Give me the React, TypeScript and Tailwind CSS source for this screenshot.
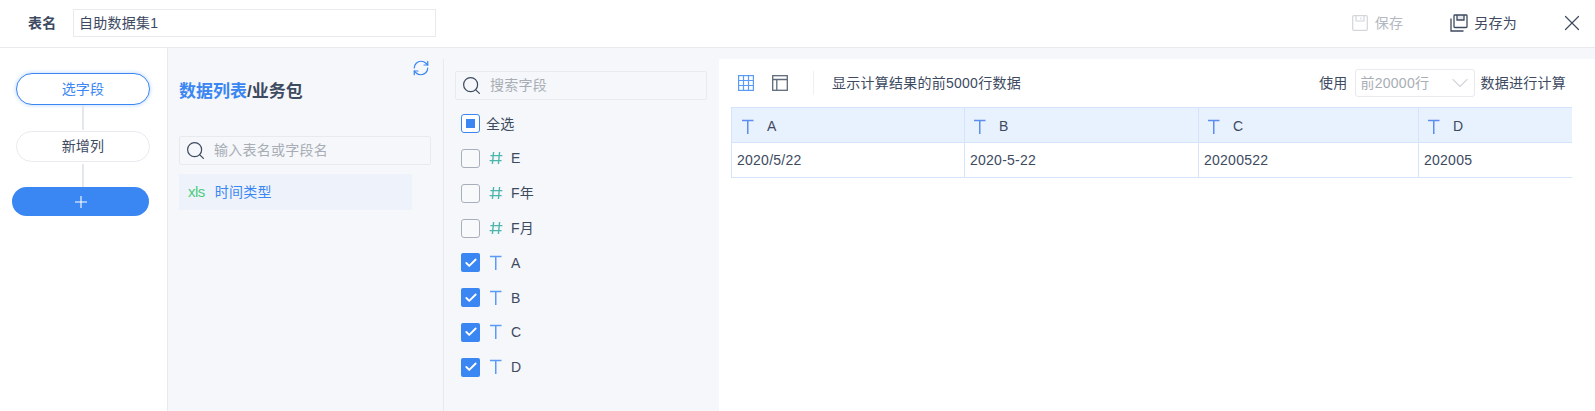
import { Check, ChevronDown, RefreshCw, Search, X } from "lucide-react"

const FONT = "font-['Liberation_Sans','Noto_Sans_CJK_SC',sans-serif]"

const FIELDS = [
  { name: "E", kind: "num", checked: false },
  { name: "F年", kind: "num", checked: false },
  { name: "F月", kind: "num", checked: false },
  { name: "A", kind: "text", checked: true },
  { name: "B", kind: "text", checked: true },
  { name: "C", kind: "text", checked: true },
  { name: "D", kind: "text", checked: true },
]

const COLUMNS = [
  { name: "A", value: "2020/5/22", width: "w-[234px]" },
  { name: "B", value: "2020-5-22", width: "w-[234px]" },
  { name: "C", value: "20200522", width: "w-[220px]" },
  { name: "D", value: "202005", width: "flex-1" },
]

function TextIcon({ className = "" }: { className?: string }) {
  return (
    <svg viewBox="0 0 14 16" className={`w-[14px] h-4 ${className}`} fill="none" stroke="currentColor" strokeWidth="1.5">
      <path d="M1 1.6h11.5M6.75 1.6V15" />
    </svg>
  )
}

function HashIcon() {
  return (
    <svg viewBox="0 0 14 14" className="w-[14px] h-[14px] text-[#4db6ac]" fill="none" stroke="currentColor" strokeWidth="1.4">
      <path d="M4.6 1 3.4 13M10.6 1 9.4 13M1.4 4.6h12M.6 9.6h12" />
    </svg>
  )
}

function SaveIcon({ className = "" }: { className?: string }) {
  return (
    <svg viewBox="0 0 16 16" className={`w-4 h-4 ${className}`} fill="none" stroke="currentColor" strokeWidth="1.2">
      <rect x="0.7" y="0.7" width="14.6" height="14.6" rx="1" />
      <path d="M4 1v5h8V1M9 2.5v2" />
    </svg>
  )
}

function SaveAsIcon() {
  return (
    <svg viewBox="0 0 18 18" className="w-[18px] h-[18px] text-[#3d4a5f]" fill="none" stroke="currentColor" strokeWidth="1.3">
      <path d="M1 4.5V17h12.5" />
      <rect x="4" y="1" width="13" height="12.5" rx="0.8" />
      <path d="M7 1v5h7V1" fill="#3d4a5f" fillOpacity="0.12" />
    </svg>
  )
}

function GridIcon() {
  return (
    <svg viewBox="0 0 16 16" className="w-4 h-4 text-[#5b9bf8]" fill="none" stroke="currentColor" strokeWidth="1.2">
      <rect x="0.6" y="0.6" width="14.8" height="14.8" />
      <path d="M5.5 1v14M10.5 1v14M1 5.5h14M1 10.5h14" />
    </svg>
  )
}

function LayoutIcon() {
  return (
    <svg viewBox="0 0 16 16" className="w-4 h-4 text-[#5f6a7a]" fill="none" stroke="currentColor" strokeWidth="1.3">
      <rect x="0.7" y="0.7" width="14.6" height="14.6" />
      <path d="M1 4.5h14M4.8 5v10" />
    </svg>
  )
}

function SearchBox({ placeholder, className = "" }: { placeholder: string; className?: string }) {
  return (
    <div className={`flex items-center h-[29px] rounded-[2px] border border-[#e8eaee] bg-[#f5f7fa] ${className}`}>
      <Search className="ml-[5px] w-[21px] h-[21px] text-[#3d4a5f]" strokeWidth={1.4} />
      <span className="ml-2 text-[14px] text-[#a8adb5]">{placeholder}</span>
    </div>
  )
}

function Box({ state }: { state: "none" | "some" | "all" }) {
  if (state === "all") {
    return (
      <span className="flex items-center justify-center w-[19px] h-[19px] rounded-[2px] bg-[#3a86f2]">
        <Check className="w-[14px] h-[14px] text-white" strokeWidth={3.2} />
      </span>
    )
  }
  if (state === "some") {
    return (
      <span className="flex items-center justify-center w-[19px] h-[19px] rounded-[3px] border border-[#3a86f2] bg-white">
        <span className="w-[9px] h-[9px] bg-[#3a86f2]" />
      </span>
    )
  }
  return <span className="block w-[19px] h-[19px] rounded-[3px] border border-[#a9afba] bg-[#f8f9fb]" />
}

export default function App() {
  return (
    <div className={`${FONT} w-[1595px] h-[411px] flex flex-col overflow-hidden bg-white text-[14px] tracking-[0.25px] text-[#3d4a5f]`}>
      {/* Header */}
      <header className="h-[48px] shrink-0 flex items-center border-b border-[#e8eaee] pb-[1px]">
        <span className="ml-7 w-[45px] font-bold text-[14px] text-[#3d4a5f]">表名</span>
        <div className="w-[363px] h-[28px] flex items-center pl-[5px] border border-[#e8eaee] bg-white">自助数据集1</div>
        <div className="ml-auto flex items-center">
          <span className="flex items-center gap-[7px] text-[#b3b8c0]">
            <SaveIcon className="text-[#d3d6db]" />
            保存
          </span>
          <span className="ml-[47px] flex items-center gap-[6px]">
            <SaveAsIcon />
            另存为
          </span>
          <X className="ml-[42px] mr-[10px] w-[26px] h-[26px] text-[#3d4a5f]" strokeWidth={1.1} />
        </div>
      </header>

      <div className="flex flex-1 min-h-0">
        {/* Steps */}
        <aside className="w-[168px] shrink-0 border-r border-[#e8eaee] bg-white pt-[25px] pl-3">
          <div className="ml-1 w-[134px] h-[32px] flex items-center justify-center rounded-full border border-[#3a86f2] bg-white text-[#3a86f2] shadow-[0_0_4px_#b9d4fa]">
            选字段
          </div>
          <div className="ml-[70px] w-[2px] h-[25px] bg-[#e4e7ec]" />
          <div className="ml-1 mt-[1px] w-[134px] h-[31px] flex items-center justify-center rounded-full border border-[#e8eaee] bg-white">
            新增列
          </div>
          <div className="ml-[70px] mt-[2px] w-[2px] h-[23px] bg-[#e4e7ec]" />
          <div className="w-[137px] h-[29px] flex items-center justify-center rounded-full bg-[#3a86f2]">
            <svg viewBox="0 0 12 12" className="w-3 h-3 text-white" fill="none" stroke="currentColor" strokeWidth="1.1">
              <path d="M6 0v12M0 6h12" />
            </svg>
          </div>
        </aside>

        <div className="flex-1 flex flex-col min-w-0 bg-[#f5f7fa]">
          <div className="flex flex-1 min-h-0 pt-[11px]">
            {/* Data list */}
            <section className="relative w-[276px] shrink-0 border-r border-[#e8eaee] pl-[11px]">
              <RefreshCw className="absolute right-[13px] top-0 w-[18px] h-[18px] text-[#3a86f2]" strokeWidth={1.6} />
              <h2 className="mt-[22px] h-[22px] leading-[22px] text-[17px] tracking-normal font-bold text-[#3d4a5f]">
                <span className="text-[#3a86f2]">数据列表</span>/业务包
              </h2>
              <SearchBox placeholder="输入表名或字段名" className="mt-[33px] w-[252px]" />
              <div className="mt-[9px] w-[233px] h-[36px] flex items-center bg-[#eef3fb]">
                <span className="ml-[9px] text-[15px] tracking-[-0.5px] text-[#4ccb7c]">xls</span>
                <span className="ml-[10px] text-[#3a86f2]">时间类型</span>
              </div>
            </section>

            {/* Field list */}
            <section className="w-[275px] shrink-0 pl-[11px]">
              <SearchBox placeholder="搜索字段" className="mt-[12px] w-[252px]" />
              <div className="ml-[6px] mt-[14.2px] h-[19px] flex items-center">
                <Box state="some" />
                <span className="ml-[6px] pt-[1px]">全选</span>
              </div>
              {FIELDS.map((f) => (
                <div key={f.name} className="ml-[6px] mt-[15.8px] h-[19px] flex items-center">
                  <Box state={f.checked ? "all" : "none"} />
                  <span className="ml-[9px] w-[14px] flex justify-center">
                    {f.kind === "num" ? <HashIcon /> : <TextIcon className="text-[#5b9bf8]" />}
                  </span>
                  <span className="ml-2 pt-[1px]">{f.name}</span>
                </div>
              ))}
            </section>

            {/* Preview */}
            <main className="flex-1 min-w-0 bg-white">
              <div className="h-[48px] flex items-center pl-[19px] pr-[29px]">
                <span className="mr-[18px]"><GridIcon /></span>
                <LayoutIcon />
                <span className="ml-[25px] w-[1px] h-6 bg-[#eef0f3]" />
                <span className="ml-[18px]">显示计算结果的前5000行数据</span>
                <div className="ml-auto flex items-center">
                  <span>使用</span>
                  <div className="ml-[7px] w-[120px] h-[28px] flex items-center justify-between pl-[5px] rounded-[3px] border border-[#e8eaee] text-[#a8adb5]">
                    前20000行
                    <ChevronDown className="w-7 h-7 text-[#d3d6db]" strokeWidth={1} />
                  </div>
                  <span className="ml-[6px]">数据进行计算</span>
                </div>
              </div>
              <div className="ml-[12px] w-[841px] flex">
                {COLUMNS.map((c, i) => (
                  <div key={c.name} className={`${c.width} border-r border-[#d5e4fa] last:border-r-0 first:border-l`}>
                    <div className={`h-[36px] flex items-center bg-[#e8f1fe] border-y border-[#d5e4fa] pt-[1px] ${i === 0 ? "pl-[9px]" : "pl-[8px]"}`}>
                      <TextIcon className="mt-[3px] text-[#5b8ef0]" />
                      <span className="ml-[12px] pt-[2px]">{c.name}</span>
                    </div>
                    <div className="h-[35px] flex items-center border-b border-[#d5e4fa] pl-[5px] pt-[1px]">{c.value}</div>
                  </div>
                ))}
              </div>
            </main>
          </div>
        </div>
      </div>
    </div>
  )
}
